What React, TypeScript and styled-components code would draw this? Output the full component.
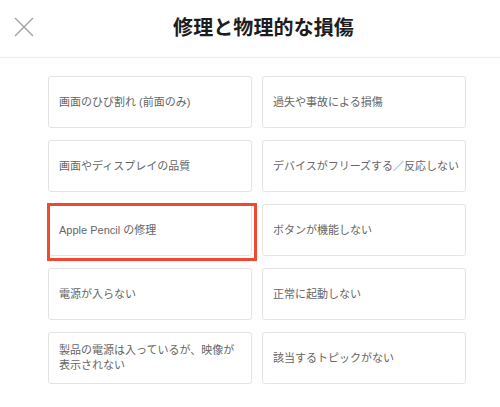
import React from 'react'
import styled, { createGlobalStyle } from 'styled-components'

const GlobalStyle = createGlobalStyle`
  html, body {
    margin: 0;
    padding: 0;
    background: #ffffff;
  }
  body {
    font-family: "Noto Sans CJK JP", "Noto Sans", sans-serif;
  }
`

const Page = styled.div`
  width: 500px;
  height: 407px;
  background: #fff;
  overflow: hidden;
`

const Header = styled.header`
  display: flex;
  align-items: center;
  height: 58px;
  padding-left: 14px;
  border-bottom: 1px solid #ececec;
  box-sizing: border-box;
`

const CloseButton = styled.button`
  display: flex;
  align-items: center;
  justify-content: center;
  width: 20px;
  height: 20px;
  padding: 0;
  margin-top: -3px;
  border: none;
  background: none;
  cursor: pointer;
`

const Title = styled.h1`
  flex: 1;
  margin: -3px 7px 0 0;
  text-align: center;
  font-size: 20px;
  font-weight: 700;
  color: #1d1d1f;
  letter-spacing: 0.1px;
  line-height: 1;
`

const Grid = styled.div`
  display: grid;
  grid-template-columns: 204px 204px;
  grid-auto-rows: 52px;
  column-gap: 10px;
  row-gap: 12px;
  padding: 18px 0 0 48px;
`

const Card = styled.div<{ $highlight?: boolean }>`
  position: relative;
  display: flex;
  align-items: center;
  padding: 0 4px 0 10px;
  border: 1px solid #e3e3e3;
  border-radius: 3px;
  box-sizing: border-box;
  font-family: "Liberation Sans", "Noto Sans CJK JP", sans-serif;
  font-size: 11px;
  line-height: 15px;
  color: #666;
  white-space: pre-line;

  ${({ $highlight }) =>
    $highlight &&
    `
    &::after {
      content: '';
      position: absolute;
      top: -2px;
      left: -2px;
      right: -6px;
      bottom: -6px;
      border: 3px solid #ee4a33;
      pointer-events: none;
    }
  `}
`

const CardText = styled.span`
  display: block;
`

const topics = [
  { label: '画面のひび割れ (前面のみ)' },
  { label: '過失や事故による損傷' },
  { label: '画面やディスプレイの品質' },
  { label: 'デバイスがフリーズする／反応しない' },
  { label: 'Apple Pencil の修理', highlight: true },
  { label: 'ボタンが機能しない' },
  { label: '電源が入らない' },
  { label: '正常に起動しない' },
  { label: '製品の電源は入っているが、映像が\n表示されない' },
  { label: '該当するトピックがない' },
]

const CloseIcon = () => (
  <svg width="20" height="20" viewBox="0 0 20 20">
    <path d="M1 1 L19 19 M19 1 L1 19" stroke="#a0a0a0" strokeWidth="1.3" fill="none" />
  </svg>
)

export default function App() {
  return (
    <Page>
      <GlobalStyle />
      <Header>
        <CloseButton aria-label="閉じる">
          <CloseIcon />
        </CloseButton>
        <Title>修理と物理的な損傷</Title>
      </Header>
      <Grid>
        {topics.map((t) => (
          <Card key={t.label} $highlight={t.highlight}>
            <CardText>{t.label}</CardText>
          </Card>
        ))}
      </Grid>
    </Page>
  )
}
